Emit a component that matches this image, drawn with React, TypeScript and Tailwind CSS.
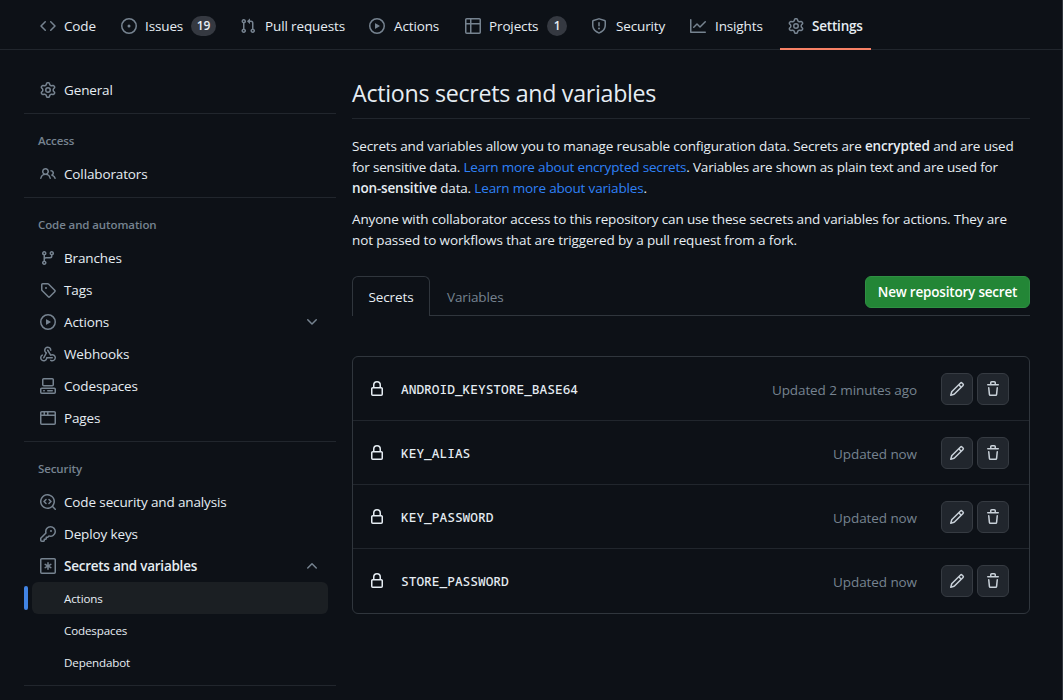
import React from "react";

const icons: Record<string, string> = {
  code: "m11.28 3.22 4.25 4.25a.75.75 0 0 1 0 1.06l-4.25 4.25a.749.749 0 0 1-1.275-.326.749.749 0 0 1 .215-.734L13.94 8l-3.72-3.72a.749.749 0 0 1 .326-1.275.749.749 0 0 1 .734.215Zm-6.56 0a.751.751 0 0 1 1.042.018.751.751 0 0 1 .018 1.042L2.06 8l3.72 3.72a.749.749 0 0 1-.326 1.275.749.749 0 0 1-.734-.215L.47 8.53a.75.75 0 0 1 0-1.06Z",
  issue: "M8 9.5a1.5 1.5 0 1 0 0-3 1.5 1.5 0 0 0 0 3ZM8 0a8 8 0 1 1 0 16A8 8 0 0 1 8 0ZM1.5 8a6.5 6.5 0 1 0 13 0 6.5 6.5 0 0 0-13 0Z",
  pull: "M1.5 3.25a2.25 2.25 0 1 1 3 2.122v5.256a2.251 2.251 0 1 1-1.5 0V5.372A2.25 2.25 0 0 1 1.5 3.25Zm5.677-.177L9.573.677A.25.25 0 0 1 10 .854V2.5h1A2.5 2.5 0 0 1 13.5 5v5.628a2.251 2.251 0 1 1-1.5 0V5a1 1 0 0 0-1-1h-1v1.646a.25.25 0 0 1-.427.177L7.177 3.427a.25.25 0 0 1 0-.354ZM3.75 2.5a.75.75 0 1 0 0 1.5.75.75 0 0 0 0-1.5Zm0 9.5a.75.75 0 1 0 0 1.5.75.75 0 0 0 0-1.5Zm8.25.75a.75.75 0 1 0 1.5 0 .75.75 0 0 0-1.5 0Z",
  play: "M8 0a8 8 0 1 1 0 16A8 8 0 0 1 8 0ZM1.5 8a6.5 6.5 0 1 0 13 0 6.5 6.5 0 0 0-13 0Zm4.879-2.773 4.264 2.559a.25.25 0 0 1 0 .428l-4.264 2.559A.25.25 0 0 1 6 10.559V5.442a.25.25 0 0 1 .379-.215Z",
  table: "M0 1.75C0 .784.784 0 1.75 0h12.5C15.216 0 16 .784 16 1.75v12.5A1.75 1.75 0 0 1 14.25 16H1.75A1.75 1.75 0 0 1 0 14.25ZM6.5 6.5v8h7.75a.25.25 0 0 0 .25-.25V6.5Zm8-1.5V1.75a.25.25 0 0 0-.25-.25H6.5V5Zm-13 1.5v7.75c0 .138.112.25.25.25H5v-8ZM5 5V1.5H1.75a.25.25 0 0 0-.25.25V5Z",
  shield: "M7.467.133a1.748 1.748 0 0 1 1.066 0l5.25 1.68A1.75 1.75 0 0 1 15 3.48V7c0 1.566-.32 3.182-1.303 4.682-.983 1.498-2.585 2.813-5.032 3.855a1.697 1.697 0 0 1-1.33 0c-2.447-1.042-4.049-2.357-5.032-3.855C1.32 10.182 1 8.566 1 7V3.48a1.75 1.75 0 0 1 1.217-1.667Zm.61 1.429a.25.25 0 0 0-.153 0l-5.25 1.68a.25.25 0 0 0-.174.238V7c0 1.358.275 2.666 1.057 3.86.784 1.194 2.121 2.34 4.366 3.297a.196.196 0 0 0 .154 0c2.245-.956 3.582-2.104 4.366-3.298C13.225 9.666 13.5 8.36 13.5 7V3.48a.251.251 0 0 0-.174-.237l-5.25-1.68ZM8.75 4.75v3a.75.75 0 0 1-1.5 0v-3a.75.75 0 0 1 1.5 0ZM9 10.5a1 1 0 1 1-2 0 1 1 0 0 1 2 0Z",
  graph: "M1.5 1.75V13.5h13.75a.75.75 0 0 1 0 1.5H.75a.75.75 0 0 1-.75-.75V1.75a.75.75 0 0 1 1.5 0Zm14.28 2.53-5.25 5.25a.75.75 0 0 1-1.06 0L7 7.06 4.28 9.78a.751.751 0 0 1-1.042-.018.751.751 0 0 1-.018-1.042l3.25-3.25a.75.75 0 0 1 1.06 0L10 7.94l4.72-4.72a.751.751 0 0 1 1.042.018.751.751 0 0 1 .018 1.042Z",
  gear: "M8 0a8.2 8.2 0 0 1 .701.031C9.444.095 9.99.645 10.16 1.29l.288 1.107c.018.066.079.158.212.224.231.114.454.243.668.386.123.082.233.09.299.071l1.103-.303c.644-.176 1.392.021 1.82.63.27.385.506.792.704 1.218.315.675.111 1.422-.364 1.891l-.814.806c-.049.048-.098.147-.088.294.016.257.016.515 0 .772-.01.147.038.246.088.294l.814.806c.475.469.679 1.216.364 1.891a7.977 7.977 0 0 1-.704 1.217c-.428.61-1.176.807-1.82.63l-1.102-.302c-.067-.019-.177-.011-.3.071a5.909 5.909 0 0 1-.668.386c-.133.066-.194.158-.211.224l-.29 1.106c-.168.646-.715 1.196-1.458 1.26a8.006 8.006 0 0 1-1.402 0c-.743-.064-1.289-.614-1.458-1.26l-.289-1.106c-.018-.066-.079-.158-.212-.224a5.738 5.738 0 0 1-.668-.386c-.123-.082-.233-.09-.299-.071l-1.103.303c-.644.176-1.392-.021-1.82-.63a8.12 8.12 0 0 1-.704-1.218c-.315-.675-.111-1.422.363-1.891l.815-.806c.05-.048.098-.147.088-.294a6.214 6.214 0 0 1 0-.772c.01-.147-.038-.246-.088-.294l-.815-.806C.635 6.045.431 5.298.746 4.623a7.92 7.92 0 0 1 .704-1.217c.428-.61 1.176-.807 1.82-.63l1.102.302c.067.019.177.011.3-.071.214-.143.437-.272.668-.386.133-.066.194-.158.211-.224l.29-1.106C6.009.645 6.556.095 7.299.03 7.53.01 7.764 0 8 0Zm-.571 1.525c-.036.003-.108.036-.137.146l-.289 1.105c-.147.561-.549.967-.998 1.189-.173.086-.34.183-.5.29-.417.278-.97.423-1.529.27l-1.103-.303c-.109-.03-.175.016-.195.045-.22.312-.412.644-.573.99-.014.031-.021.11.059.19l.815.806c.411.406.562.957.53 1.456a4.709 4.709 0 0 0 0 .582c.032.499-.119 1.05-.53 1.456l-.815.806c-.081.08-.073.159-.059.19.162.346.353.677.573.989.02.03.085.076.195.046l1.102-.303c.56-.153 1.113-.008 1.53.27.161.107.328.204.501.29.447.222.85.629.997 1.189l.289 1.105c.029.109.101.143.137.146a6.6 6.6 0 0 0 1.142 0c.036-.003.108-.036.137-.146l.289-1.105c.147-.561.549-.967.998-1.189.173-.086.34-.183.5-.29.417-.278.97-.423 1.529-.27l1.103.303c.109.029.175-.016.195-.045.22-.313.411-.644.573-.99.014-.031.021-.11-.059-.19l-.815-.806c-.411-.406-.562-.957-.53-1.456a4.709 4.709 0 0 0 0-.582c-.032-.499.119-1.05.53-1.456l.815-.806c.081-.08.073-.159.059-.19a6.464 6.464 0 0 0-.573-.989c-.02-.03-.085-.076-.195-.046l-1.102.303c-.56.153-1.113.008-1.53-.27a4.44 4.44 0 0 0-.501-.29c-.447-.222-.85-.629-.997-1.189l-.289-1.105c-.029-.11-.101-.143-.137-.146a6.6 6.6 0 0 0-1.142 0ZM11 8a3 3 0 1 1-6 0 3 3 0 0 1 6 0ZM9.5 8a1.5 1.5 0 1 0-3.001.001A1.5 1.5 0 0 0 9.5 8Z",
  people: "M2 5.5a3.5 3.5 0 1 1 5.898 2.549 5.508 5.508 0 0 1 3.034 4.084.75.75 0 1 1-1.482.235 4 4 0 0 0-7.9 0 .75.75 0 0 1-1.482-.236A5.507 5.507 0 0 1 3.102 8.05 3.493 3.493 0 0 1 2 5.5ZM11 4a3.001 3.001 0 0 1 2.22 5.018 5.01 5.01 0 0 1 2.56 3.012.749.749 0 0 1-.885.954.752.752 0 0 1-.549-.514 3.507 3.507 0 0 0-2.522-2.372.75.75 0 0 1-.574-.73v-.352a.75.75 0 0 1 .416-.672A1.5 1.5 0 0 0 11 5.5.75.75 0 0 1 11 4Zm-5.5-.5a2 2 0 1 0-.001 3.999A2 2 0 0 0 5.5 3.5Z",
  branch: "M9.5 3.25a2.25 2.25 0 1 1 3 2.122V6A2.5 2.5 0 0 1 10 8.5H6a1 1 0 0 0-1 1v1.128a2.251 2.251 0 1 1-1.5 0V5.372a2.25 2.25 0 1 1 1.5 0v1.836A2.493 2.493 0 0 1 6 7h4a1 1 0 0 0 1-1v-.628A2.25 2.25 0 0 1 9.5 3.25Zm-6 0a.75.75 0 1 0 1.5 0 .75.75 0 0 0-1.5 0Zm8.25-.75a.75.75 0 1 0 0 1.5.75.75 0 0 0 0-1.5ZM4.25 12a.75.75 0 1 0 0 1.5.75.75 0 0 0 0-1.5Z",
  tag: "M1 7.775V2.75C1 1.784 1.784 1 2.75 1h5.025c.464 0 .91.184 1.238.513l6.25 6.25a1.75 1.75 0 0 1 0 2.474l-5.026 5.026a1.75 1.75 0 0 1-2.474 0l-6.25-6.25A1.752 1.752 0 0 1 1 7.775Zm1.5 0c0 .066.026.13.073.177l6.25 6.25a.25.25 0 0 0 .354 0l5.025-5.025a.25.25 0 0 0 0-.354l-6.25-6.25a.25.25 0 0 0-.177-.073H2.75a.25.25 0 0 0-.25.25ZM6 5a1 1 0 1 1 0 2 1 1 0 0 1 0-2Z",
  webhook: "M5.5 4.25a2.25 2.25 0 0 1 4.5 0 .75.75 0 0 0 1.5 0 3.75 3.75 0 1 0-6.14 2.889l-2.272 4.258a.75.75 0 0 0 1.324.706L7 7.25a.75.75 0 0 0-.309-1.015A2.25 2.25 0 0 1 5.5 4.25ZM7.364 3.607a.75.75 0 0 1 1.03.257l2.608 4.349a3.75 3.75 0 1 1-.628 6.785.75.75 0 0 1 .752-1.299 2.25 2.25 0 1 0-.033-3.88.75.75 0 0 1-1.03-.256L7.107 4.636a.75.75 0 0 1 .257-1.03ZM2.9 8.776A.75.75 0 0 1 2.625 9.8 2.25 2.25 0 1 0 6 11.75a.75.75 0 0 1 .75-.751h5.5a.75.75 0 0 1 0 1.5H7.425a3.751 3.751 0 1 1-5.55-3.998.75.75 0 0 1 1.024.274Z",
  codespaces: "M0 11.25c0-.966.784-1.75 1.75-1.75h12.5c.966 0 1.75.784 1.75 1.75v3A1.75 1.75 0 0 1 14.25 16H1.75A1.75 1.75 0 0 1 0 14.25Zm2-9.5C2 .784 2.784 0 3.75 0h8.5C13.216 0 14 .784 14 1.75v5a1.75 1.75 0 0 1-1.75 1.75h-8.5A1.75 1.75 0 0 1 2 6.75Zm1.75-.25a.25.25 0 0 0-.25.25v5c0 .138.112.25.25.25h8.5a.25.25 0 0 0 .25-.25v-5a.25.25 0 0 0-.25-.25Zm-2 9.5a.25.25 0 0 0-.25.25v3c0 .138.112.25.25.25h12.5a.25.25 0 0 0 .25-.25v-3a.25.25 0 0 0-.25-.25ZM7 12.75a.75.75 0 0 1 .75-.75h4.5a.75.75 0 0 1 0 1.5h-4.5a.75.75 0 0 1-.75-.75Zm-4 0a.75.75 0 0 1 .75-.75h.5a.75.75 0 0 1 0 1.5h-.5a.75.75 0 0 1-.75-.75Z",
  browser: "M0 2.75C0 1.784.784 1 1.75 1h12.5c.966 0 1.75.784 1.75 1.75v10.5A1.75 1.75 0 0 1 14.25 15H1.75A1.75 1.75 0 0 1 0 13.25ZM14.5 6h-13v7.25c0 .138.112.25.25.25h12.5a.25.25 0 0 0 .25-.25Zm-6-3.5v2h6V2.75a.25.25 0 0 0-.25-.25ZM5 2.5v2h2v-2Zm-3.25 0a.25.25 0 0 0-.25.25V4.5h2v-2Z",
  codescan: "M8.47 4.97a.75.75 0 0 0 0 1.06L9.94 7.5 8.47 8.97a.75.75 0 1 0 1.06 1.06l2-2a.75.75 0 0 0 0-1.06l-2-2a.75.75 0 0 0-1.06 0ZM6.53 6.03a.75.75 0 0 0-1.06-1.06l-2 2a.75.75 0 0 0 0 1.06l2 2a.75.75 0 1 0 1.06-1.06L5.06 7.5l1.47-1.47ZM12.246 13.307a7.501 7.501 0 1 1 1.06-1.06l2.474 2.473a.749.749 0 1 1-1.06 1.06l-2.474-2.473ZM1.5 7.5a6.002 6.002 0 0 0 3.608 5.504 6.002 6.002 0 0 0 6.486-1.117.748.748 0 0 1 .292-.293A6 6 0 1 0 1.5 7.5Z",
  key: "M10.5 0a5.499 5.499 0 1 1-1.288 10.848l-.932.932a.749.749 0 0 1-.53.22H7v.75a.749.749 0 0 1-.22.53l-.5.5a.749.749 0 0 1-.53.22H5v.75a.749.749 0 0 1-.22.53l-.5.5a.749.749 0 0 1-.53.22h-2A1.75 1.75 0 0 1 0 14.25v-2c0-.199.079-.389.22-.53l4.932-4.932A5.5 5.5 0 0 1 10.5 0Zm-4 5.5c-.001.431.069.86.205 1.269a.75.75 0 0 1-.181.768L1.5 12.56v1.69c0 .138.112.25.25.25h1.69l.06-.06v-1.19a.75.75 0 0 1 .75-.75h1.19l.06-.06v-1.19a.75.75 0 0 1 .75-.75h1.19l1.023-1.025a.75.75 0 0 1 .768-.18A4 4 0 1 0 6.5 5.5ZM11 6a1 1 0 1 1 0-2 1 1 0 0 1 0 2Z",
  asterisk: "M1.75 0h12.5C15.216 0 16 .784 16 1.75v12.5A1.75 1.75 0 0 1 14.25 16H1.75A1.75 1.75 0 0 1 0 14.25V1.75C0 .784.784 0 1.75 0Zm0 1.5a.25.25 0 0 0-.25.25v12.5c0 .138.112.25.25.25h12.5a.25.25 0 0 0 .25-.25V1.75a.25.25 0 0 0-.25-.25ZM8 4a.75.75 0 0 1 .75.75V6.7l1.69-.975a.75.75 0 1 1 .75 1.299L9.5 8l1.69.976a.75.75 0 1 1-.75 1.299L8.75 9.3v1.95a.75.75 0 0 1-1.5 0V9.3l-1.69.975a.75.75 0 1 1-.75-1.299L6.5 8l-1.69-.976a.75.75 0 1 1 .75-1.299l1.69.975V4.75A.75.75 0 0 1 8 4Z",
  down: "M12.78 5.22a.749.749 0 0 1 0 1.06l-4.25 4.25a.749.749 0 0 1-1.06 0L3.22 6.28a.749.749 0 1 1 1.06-1.06L8 8.939l3.72-3.719a.749.749 0 0 1 1.06 0Z",
  up: "M3.22 10.53a.749.749 0 0 1 0-1.06l4.25-4.25a.749.749 0 0 1 1.06 0l4.25 4.25a.749.749 0 1 1-1.06 1.06L8 6.811 4.28 10.53a.749.749 0 0 1-1.06 0Z",
  lock: "M4 4a4 4 0 0 1 8 0v2h.25c.966 0 1.75.784 1.75 1.75v5.5A1.75 1.75 0 0 1 12.25 15h-8.5A1.75 1.75 0 0 1 2 13.25v-5.5C2 6.784 2.784 6 3.75 6H4Zm8.25 3.5h-8.5a.25.25 0 0 0-.25.25v5.5c0 .138.112.25.25.25h8.5a.25.25 0 0 0 .25-.25v-5.5a.25.25 0 0 0-.25-.25ZM10.5 6V4a2.5 2.5 0 1 0-5 0v2Z",
  pencil: "M11.013 1.427a1.75 1.75 0 0 1 2.474 0l1.086 1.086a1.75 1.75 0 0 1 0 2.474l-8.61 8.61c-.21.21-.47.364-.756.445l-3.251.93a.75.75 0 0 1-.927-.928l.929-3.25c.081-.286.235-.547.445-.758l8.61-8.61Zm.176 4.823L9.75 4.81l-6.286 6.287a.253.253 0 0 0-.064.108l-.558 1.953 1.953-.558a.253.253 0 0 0 .108-.064Zm1.238-3.763a.25.25 0 0 0-.354 0L10.811 3.75l1.439 1.44 1.263-1.263a.25.25 0 0 0 0-.354Z",
  trash: "M11 1.75V3h2.25a.75.75 0 0 1 0 1.5H2.75a.75.75 0 0 1 0-1.5H5V1.75C5 .784 5.784 0 6.75 0h2.5C10.216 0 11 .784 11 1.75ZM4.496 6.675l.66 6.6a.25.25 0 0 0 .249.225h5.19a.25.25 0 0 0 .249-.225l.66-6.6a.75.75 0 0 1 1.492.149l-.66 6.6A1.748 1.748 0 0 1 10.595 15h-5.19a1.75 1.75 0 0 1-1.741-1.575l-.66-6.6a.75.75 0 1 1 1.492-.15ZM6.5 1.75V3h3V1.75a.25.25 0 0 0-.25-.25h-2.5a.25.25 0 0 0-.25.25Z",
};

function Icon({ name, className = "text-[#768390]" }: { name: string; className?: string }) {
  return (
    <svg viewBox="0 0 16 16" className={`size-4 shrink-0 ${className}`} fill="currentColor" aria-hidden="true">
      <path d={icons[name]} />
    </svg>
  );
}

type Tab = { icon: string; label: string; width: string; count?: number; badge?: string; active?: boolean };

const tabs: Tab[] = [
  { icon: "code", label: "Code", width: "w-[33px]" },
  { icon: "issue", label: "Issues", width: "w-[38px]", count: 19, badge: "w-[25px]" },
  { icon: "pull", label: "Pull requests", width: "w-[81px] pl-px" },
  { icon: "play", label: "Actions", width: "w-12 pl-px" },
  { icon: "table", label: "Projects", width: "w-[50px]", count: 1, badge: "w-5" },
  { icon: "shield", label: "Security", width: "w-[51px] pl-px" },
  { icon: "graph", label: "Insights", width: "w-[50px] pl-px" },
  { icon: "gear", label: "Settings", width: "w-[51px]", active: true },
];

function RepoNav() {
  return (
    <nav className="flex h-[50px] items-start gap-2 border-b border-[#21262d] pl-8">
      {tabs.map((t) => (
        <div
          key={t.label}
          className={`flex h-[50px] items-start gap-2 border-b-2 px-2 pt-4 ${t.active ? "border-[#f78166]" : "border-transparent"}`}
        >
          <Icon name={t.icon} className="mt-0.5 text-[#768390]" />
          <span className={`whitespace-nowrap leading-5 ${t.width} ${t.active ? "font-semibold tracking-[-0.2px]" : ""}`}>{t.label}</span>
          {t.count !== undefined && (
            <span className={`h-5 rounded-full bg-[#353941] text-center text-xs leading-5 font-semibold ${t.badge}`}>
              {t.count}
            </span>
          )}
        </div>
      ))}
    </nav>
  );
}

function Item({ icon, label, chevron, bold }: { icon: string; label: string; chevron?: string; bold?: boolean }) {
  return (
    <li className="flex h-8 items-center gap-2 pr-4 pl-4">
      <Icon name={icon} />
      <span className={`flex-1 whitespace-nowrap leading-5 ${bold ? "font-semibold tracking-[-0.25px]" : ""}`}>{label}</span>
      {chevron && <Icon name={chevron} />}
    </li>
  );
}

function Divider() {
  return <li className="my-[7px] h-px bg-[#21262d]" role="separator" />;
}

function Section({ title, children }: { title: string; children: React.ReactNode }) {
  return (
    <>
      <Divider />
      <li>
        <h3 className="px-3.5 pt-[11px] pb-2 text-[11.5px] leading-[18px] font-semibold tracking-[-0.1px] text-[#768390]">{title}</h3>
        <ul>{children}</ul>
      </li>
    </>
  );
}

function Sidebar() {
  return (
    <aside className="w-[312px] shrink-0">
      <ul className="pt-6">
        <Item icon="gear" label="General" />
        <Section title="Access">
          <Item icon="people" label="Collaborators" />
        </Section>
        <Section title="Code and automation">
          <Item icon="branch" label="Branches" />
          <Item icon="tag" label="Tags" />
          <Item icon="play" label="Actions" chevron="down" />
          <Item icon="webhook" label="Webhooks" />
          <Item icon="codespaces" label="Codespaces" />
          <Item icon="browser" label="Pages" />
        </Section>
        <Section title="Security">
          <Item icon="codescan" label="Code security and analysis" />
          <Item icon="key" label="Deploy keys" />
          <Item icon="asterisk" label="Secrets and variables" chevron="up" bold />
          <li className="flex h-8 items-center">
            <span className="h-6 w-1 rounded-md bg-[#4184e4]" />
            <span className="mr-2 ml-1 flex h-8 flex-1 items-center rounded-md bg-[#1b1f23] pl-8 text-[11.6px]">Actions</span>
          </li>
          <li className="flex h-8 items-center pl-10 text-[11.6px]">Codespaces</li>
          <li className="flex h-8 items-center pl-10 text-[11.6px]">Dependabot</li>
        </Section>
        <Divider />
      </ul>
    </aside>
  );
}

const secrets = [
  { name: "ANDROID_KEYSTORE_BASE64", updated: "Updated 2 minutes ago" },
  { name: "KEY_ALIAS", updated: "Updated now" },
  { name: "KEY_PASSWORD", updated: "Updated now" },
  { name: "STORE_PASSWORD", updated: "Updated now" },
];

function SquareButton({ icon }: { icon: string }) {
  return (
    <button className="flex size-8 items-center justify-center rounded-md border border-[#363b42] bg-[#21262d]">
      <Icon name={icon} className="text-[#c9d1d9]" />
    </button>
  );
}

function SecretsList() {
  return (
    <ul className="mt-10 rounded-md border border-[#30363d]">
      {secrets.map((s) => (
        <li key={s.name} className="flex h-16 items-center border-b border-[#21262d] pr-5 pl-4 last:border-transparent">
          <Icon name="lock" className="text-[#e6edf3]" />
          <span className="ml-4 flex-1 pt-0.5 font-['Noto_Sans_Mono','DejaVu_Sans_Mono',monospace] text-[12.83px] font-medium tracking-normal">{s.name}</span>
          <span className="mr-6 pt-1 tracking-[-0.09px] text-[#768390]">{s.updated}</span>
          <span className="flex gap-1">
            <SquareButton icon="pencil" />
            <SquareButton icon="trash" />
          </span>
        </li>
      ))}
    </ul>
  );
}

export default function App() {
  return (
    <div className="h-[700px] overflow-hidden border-r border-[#30363d] bg-[#0d1117] font-['Open_Sans','Noto_Sans',sans-serif] text-[13.5px] leading-[21px] tracking-[-0.13px] text-[#e6edf3]">
      <RepoNav />
      <div className="flex gap-4 pl-6">
        <Sidebar />
        <main className="w-[678px] shrink-0 whitespace-nowrap pt-6">
          <h1 className="h-[45px] border-b border-[#21262d] text-[23.2px] leading-[38px] tracking-[-0.28px]">Actions secrets and variables</h1>
          <p className="mt-[17px] tracking-[-0.14px]">
            Secrets and variables allow you to manage reusable configuration data. Secrets are <b className="font-semibold">encrypted</b> and are used
            <br />
            <span className="tracking-[-0.18px]">
              for sensitive data. <a className="text-[#2f81f7]">Learn more about encrypted secrets</a>. Variables are shown as plain text and are used for
            </span>
            <br />
            <span className="tracking-[-0.17px]">
              <b className="font-semibold">non-sensitive</b> data. <a className="text-[#2f81f7]">Learn more about variables</a>.
            </span>
          </p>
          <p className="mt-2.5">
            <span className="tracking-[-0.145px]">
              Anyone with collaborator access to this repository can use these secrets and variables for actions. They are
            </span>
            <br />
            <span className="tracking-[-0.11px]">not passed to workflows that are triggered by a pull request from a fork.</span>
          </p>
          <div className="mt-[25px] flex h-10 items-end border-b border-[#30363d]">
            <div className="-mb-px flex h-10 w-[78px] items-center justify-center rounded-t-md border border-b-0 border-[#30363d] bg-[#0d1117] pt-0.5">Secrets</div>
            <div className="flex h-[39px] items-center pt-[3px] pl-[17px] text-[#768390]">Variables</div>
            <button className="mb-[7px] ml-auto h-8 w-[165px] rounded-md border border-[#2f9043] bg-[#238636] font-semibold tracking-[-0.2px] text-white">New repository secret</button>
          </div>
          <SecretsList />
        </main>
      </div>
    </div>
  );
}
